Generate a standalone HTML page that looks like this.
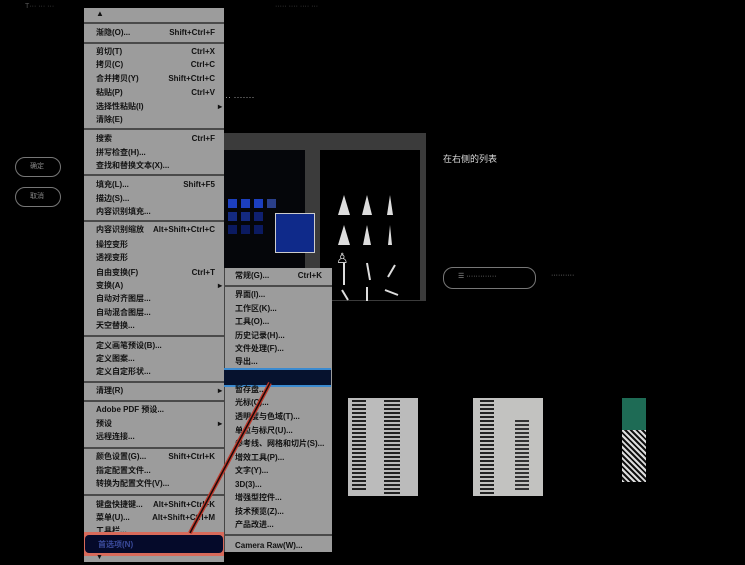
<!DOCTYPE html>
<html><head><meta charset="utf-8"><style>
body{margin:0;width:745px;height:565px;background:#000;position:relative;overflow:hidden;font-family:"Liberation Sans","Noto Sans CJK SC",sans-serif}
.a{position:absolute}
.m{position:absolute;background:#9c9c9c}
.i{position:absolute;font-size:8px;font-weight:bold;color:#111;line-height:10px;white-space:nowrap}
.s{position:absolute;height:2px;background:#4a4a4a}
.k{position:absolute;font-size:8px;font-weight:bold;color:#111;line-height:10px;white-space:nowrap;text-align:right}
.w{color:#ddd;font-size:9px;position:absolute;white-space:nowrap}
.btn{position:absolute;border:1px solid #777;border-radius:10px}
.sq{position:absolute;width:9px;height:9px;background:#1c3fbf}
</style></head><body>
<div class="w" style="left:25px;top:3px;color:#555;font-size:7px">T··· ··· ···</div>
<div class="w" style="left:275px;top:3px;color:#555;font-size:7px">·····  ···· ···· ···</div>

<!-- left buttons -->
<div class="btn" style="left:15px;top:157px;width:44px;height:18px"></div>
<div class="btn" style="left:15px;top:187px;width:44px;height:18px"></div>
<div class="w" style="left:30px;top:161px;font-size:7px;color:#888">确定</div>
<div class="w" style="left:30px;top:191px;font-size:7px;color:#888">取消</div>

<!-- dialog -->
<div class="a" style="left:224px;top:133px;width:202px;height:168px;background:#3b3b3b"></div>
<div class="a" style="left:224px;top:150px;width:81px;height:135px;background:#05060a"></div>
<div class="a" style="left:320px;top:150px;width:100px;height:150px;background:#000"></div>
<div class="sq" style="left:228px;top:199px"></div><div class="sq" style="left:241px;top:199px"></div><div class="sq" style="left:254px;top:199px"></div><div class="sq" style="left:267px;top:199px;background:#2a3f8a"></div>
<div class="sq" style="left:228px;top:212px;background:#142a80"></div><div class="sq" style="left:241px;top:212px;background:#142a80"></div><div class="sq" style="left:254px;top:212px;background:#0f2070"></div>
<div class="sq" style="left:228px;top:225px;background:#0b1a60"></div><div class="sq" style="left:241px;top:225px;background:#0b1a60"></div><div class="sq" style="left:254px;top:225px;background:#0b1a60"></div>
<div class="a" style="left:275px;top:213px;width:38px;height:38px;background:#0f2a8a;border:1px solid #ccc"></div>
<div class="w" style="left:336px;top:250px;font-size:14px">♙</div>
<svg class="a" style="left:330px;top:195px" width="80" height="110">
<g fill="#ddd"><polygon points="14,0 8,20 20,20"/><polygon points="37,0 32,20 42,20"/><polygon points="60,0 57,20 63,20"/>
<polygon points="14,30 8,50 20,50"/><polygon points="37,30 33,50 41,50"/><polygon points="60,30 58,50 62,50"/></g>
<g stroke="#ddd" stroke-width="2" fill="none"><path d="M14,68 L14,90 M37,68 L40,85 M65,70 L58,82 M12,95 L18,105 M37,92 L37,106 M55,95 L68,100"/></g>
</svg>

<div class="w" style="left:443px;top:152px">在右侧的列表</div>
<div class="btn" style="left:443px;top:267px;width:91px;height:20px"></div>
<div class="w" style="left:458px;top:272px;font-size:7px;color:#999">☰ ·············</div>
<div class="w" style="left:551px;top:272px;font-size:7px;color:#999">··········</div>
<div class="w" style="left:225px;top:92px;color:#aaa">·· ·······</div>

<!-- images -->
<div class="a" style="left:348px;top:398px;width:70px;height:98px;background:#bbb"></div>
<div class="a" style="left:352px;top:400px;width:14px;height:92px;background:repeating-linear-gradient(#222 0 2px,#bbb 2px 4px)"></div>
<div class="a" style="left:384px;top:400px;width:16px;height:94px;background:repeating-linear-gradient(#222 0 2px,#bbb 2px 4px)"></div>
<div class="a" style="left:473px;top:398px;width:70px;height:98px;background:#c2c2c0"></div>
<div class="a" style="left:480px;top:400px;width:14px;height:94px;background:repeating-linear-gradient(#222 0 2px,#c2c2c0 2px 4px)"></div>
<div class="a" style="left:515px;top:420px;width:14px;height:70px;background:repeating-linear-gradient(#333 0 2px,#c2c2c0 2px 4px)"></div>
<div class="a" style="left:622px;top:398px;width:24px;height:32px;background:#1e6b55"></div>
<div class="a" style="left:622px;top:430px;width:24px;height:52px;background:repeating-linear-gradient(45deg,#ddd 0 2px,#111 2px 4px)"></div>

<!-- left menu -->
<div class="m" style="left:84px;top:8px;width:140px;height:554px"></div>
<div class="i" style="left:96px;top:9px">▲</div>
<div class="s" style="left:84px;top:22px;width:140px"></div>
<div class="i" style="left:96px;top:28px">渐隐(O)...</div><div class="k" style="left:150px;top:28px;width:65px">Shift+Ctrl+F</div>
<div class="s" style="left:84px;top:42px;width:140px"></div>
<div class="i" style="left:96px;top:47px">剪切(T)</div><div class="k" style="left:150px;top:47px;width:65px">Ctrl+X</div>
<div class="i" style="left:96px;top:60px">拷贝(C)</div><div class="k" style="left:150px;top:60px;width:65px">Ctrl+C</div>
<div class="i" style="left:96px;top:74px">合并拷贝(Y)</div><div class="k" style="left:150px;top:74px;width:65px">Shift+Ctrl+C</div>
<div class="i" style="left:96px;top:88px">粘贴(P)</div><div class="k" style="left:150px;top:88px;width:65px">Ctrl+V</div>
<div class="i" style="left:96px;top:102px">选择性粘贴(I)</div><div class="k" style="left:150px;top:102px;width:72px">▸</div>
<div class="i" style="left:96px;top:115px">清除(E)</div>
<div class="s" style="left:84px;top:128px;width:140px"></div>
<div class="i" style="left:96px;top:134px">搜索</div><div class="k" style="left:150px;top:134px;width:65px">Ctrl+F</div>
<div class="i" style="left:96px;top:148px">拼写检查(H)...</div>
<div class="i" style="left:96px;top:161px">查找和替换文本(X)...</div>
<div class="s" style="left:84px;top:174px;width:140px"></div>
<div class="i" style="left:96px;top:180px">填充(L)...</div><div class="k" style="left:150px;top:180px;width:65px">Shift+F5</div>
<div class="i" style="left:96px;top:194px">描边(S)...</div>
<div class="i" style="left:96px;top:207px">内容识别填充...</div>
<div class="s" style="left:84px;top:220px;width:140px"></div>
<div class="i" style="left:96px;top:225px">内容识别缩放</div><div class="k" style="left:140px;top:225px;width:75px">Alt+Shift+Ctrl+C</div>
<div class="i" style="left:96px;top:240px">操控变形</div>
<div class="i" style="left:96px;top:253px">透视变形</div>
<div class="i" style="left:96px;top:268px">自由变换(F)</div><div class="k" style="left:150px;top:268px;width:65px">Ctrl+T</div>
<div class="i" style="left:96px;top:281px">变换(A)</div><div class="k" style="left:150px;top:281px;width:72px">▸</div>
<div class="i" style="left:96px;top:294px">自动对齐图层...</div>
<div class="i" style="left:96px;top:308px">自动混合图层...</div>
<div class="i" style="left:96px;top:321px">天空替换...</div>
<div class="s" style="left:84px;top:335px;width:140px"></div>
<div class="i" style="left:96px;top:341px">定义画笔预设(B)...</div>
<div class="i" style="left:96px;top:354px">定义图案...</div>
<div class="i" style="left:96px;top:367px">定义自定形状...</div>
<div class="s" style="left:84px;top:381px;width:140px"></div>
<div class="i" style="left:96px;top:386px">清理(R)</div><div class="k" style="left:150px;top:386px;width:72px">▸</div>
<div class="s" style="left:84px;top:400px;width:140px"></div>
<div class="i" style="left:96px;top:405px">Adobe PDF 预设...</div>
<div class="i" style="left:96px;top:419px">预设</div><div class="k" style="left:150px;top:419px;width:72px">▸</div>
<div class="i" style="left:96px;top:432px">远程连接...</div>
<div class="s" style="left:84px;top:447px;width:140px"></div>
<div class="i" style="left:96px;top:452px">颜色设置(G)...</div><div class="k" style="left:150px;top:452px;width:65px">Shift+Ctrl+K</div>
<div class="i" style="left:96px;top:466px">指定配置文件...</div>
<div class="i" style="left:96px;top:479px">转换为配置文件(V)...</div>
<div class="s" style="left:84px;top:494px;width:140px"></div>
<div class="i" style="left:96px;top:500px">键盘快捷键...</div><div class="k" style="left:140px;top:500px;width:75px">Alt+Shift+Ctrl+K</div>
<div class="i" style="left:96px;top:513px">菜单(U)...</div><div class="k" style="left:140px;top:513px;width:75px">Alt+Shift+Ctrl+M</div>
<div class="i" style="left:96px;top:526px">工具栏...</div>
<div class="a" style="left:84px;top:532px;width:140px;height:24px;background:#d86a5a"></div>
<div class="a" style="left:85px;top:535px;width:138px;height:18px;background:#050a2a;border-radius:4px"></div>
<div class="i" style="left:98px;top:540px;color:#3a4a9a">首选项(N)</div>
<div class="i" style="left:96px;top:553px;font-size:7px">▼</div>

<!-- submenu -->
<div class="m" style="left:224px;top:268px;width:107px;height:284px;border-left:1px solid #444"></div>
<div class="i" style="left:235px;top:271px">常规(G)...</div><div class="k" style="left:280px;top:271px;width:42px">Ctrl+K</div>
<div class="s" style="left:224px;top:285px;width:108px"></div>
<div class="i" style="left:235px;top:290px">界面(I)...</div>
<div class="i" style="left:235px;top:304px">工作区(K)...</div>
<div class="i" style="left:235px;top:317px">工具(O)...</div>
<div class="i" style="left:235px;top:331px">历史记录(H)...</div>
<div class="i" style="left:235px;top:344px">文件处理(F)...</div>
<div class="i" style="left:235px;top:357px">导出...</div>
<div class="a" style="left:224px;top:368px;width:107px;height:15px;background:#06122e;border-top:2px solid #3a8ad0;border-bottom:2px solid #3a8ad0"></div>
<div class="i" style="left:235px;top:385px">暂存盘...</div>
<div class="i" style="left:235px;top:398px">光标(C)...</div>
<div class="i" style="left:235px;top:412px">透明度与色域(T)...</div>
<div class="i" style="left:235px;top:426px">单位与标尺(U)...</div>
<div class="i" style="left:235px;top:439px">参考线、网格和切片(S)...</div>
<div class="i" style="left:235px;top:453px">增效工具(P)...</div>
<div class="i" style="left:235px;top:466px">文字(Y)...</div>
<div class="i" style="left:235px;top:480px">3D(3)...</div>
<div class="i" style="left:235px;top:493px">增强型控件...</div>
<div class="i" style="left:235px;top:507px">技术预览(Z)...</div>
<div class="i" style="left:235px;top:520px">产品改进...</div>
<div class="s" style="left:224px;top:534px;width:108px"></div>
<div class="i" style="left:235px;top:541px">Camera Raw(W)...</div>

<svg class="a" style="left:0;top:0" width="745" height="565"><line x1="190" y1="533" x2="270" y2="383" stroke="#c0392b" stroke-width="4"/><line x1="190" y1="533" x2="270" y2="383" stroke="#1a0a0a" stroke-width="1.5"/></svg>
</body></html>
